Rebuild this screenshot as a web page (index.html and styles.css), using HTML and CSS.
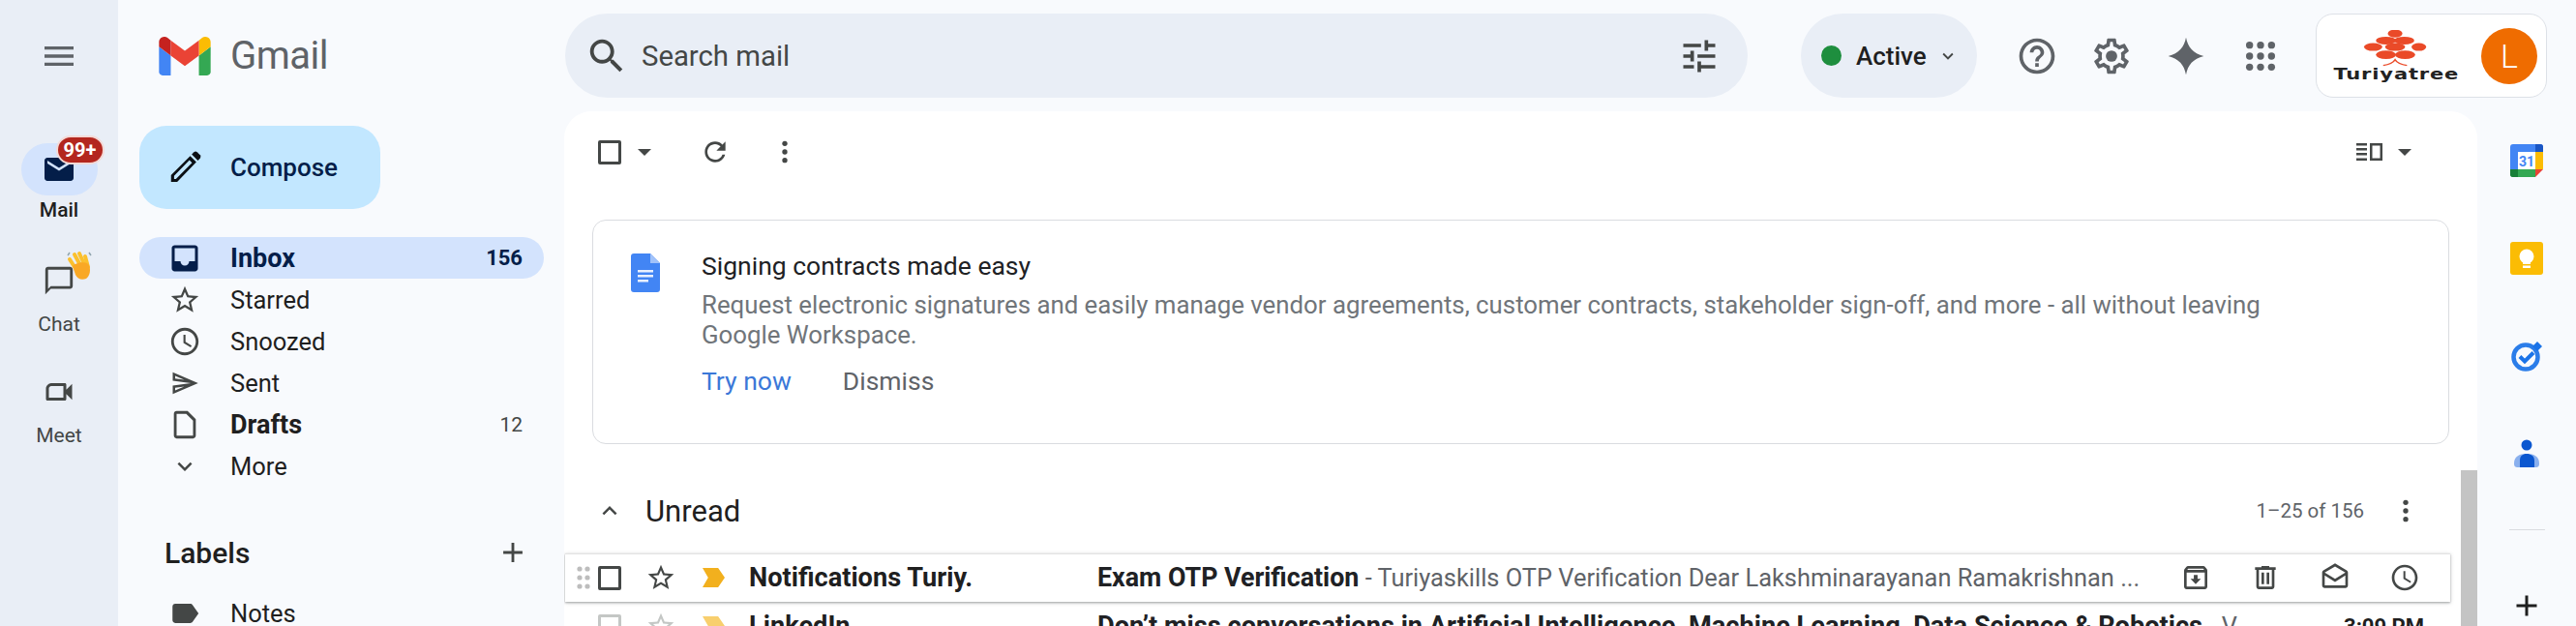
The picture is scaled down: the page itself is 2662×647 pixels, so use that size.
FILE: index.html
```html
<!DOCTYPE html>
<html lang="en">
<head>
<meta charset="utf-8">
<title>Inbox - Gmail</title>
<link rel="stylesheet" href="styles.css">
</head>
<body>
<div class="app">
  <aside class="rail">
    <div class="rail-top">
      <svg class="ic-grey" width="40" height="40" viewBox="0 0 24 24"><path d="M3 18h18v-2H3v2zm0-5h18v-2H3v2zm0-7v2h18V6H3z"/></svg>
    </div>
    <nav class="rail-items">
      <div class="rail-item active">
        <div class="rail-pill">
          <svg class="ic-navy" width="36" height="36" viewBox="0 0 24 24"><path d="M20 4H4c-1.100 0-2 .9-2 2v12c0 1.100.9 2 2 2h16c1.100 0 2-.9 2-2V6c0-1.100-.9-2-2-2zm0 4l-8 5-8-5V6l8 5 8-5v2z"/></svg>
          <span class="badge">99+</span>
        </div>
        <span class="rail-label">Mail</span>
      </div>
      <div class="rail-item">
        <div class="rail-pill">
          <svg class="ic-dark" width="34" height="34" viewBox="0 0 24 24"><path d="M20 2H4c-1.100 0-2 .9-2 2v18l4-4h14c1.100 0 2-.9 2-2V4c0-1.100-.9-2-2-2zm0 14H6l-2 2V4h16v12z"/></svg>
          <svg class="wave" width="28" height="32" viewBox="0 0 28 32"><g fill="none" stroke="#fbc02d" stroke-width="4" stroke-linecap="round"><path d="M4 10l7 11"/><path d="M9 5l7 13"/><path d="M14 4l6 13"/><path d="M20 7l3 11"/></g><path d="M7 17c2-3 14-6 17-1 2 5 1 11-3 14-5 2-9 0-11-4z" fill="#f9a825"/><path d="M2 6l2-3M24 3l2 3" stroke="#90a4ae" stroke-width="1.500" fill="none"/></svg>
        </div>
        <span class="rail-label muted">Chat</span>
      </div>
      <div class="rail-item">
        <div class="rail-pill">
          <svg class="ic-dark" width="36" height="36" viewBox="0 0 24 24"><path d="M17 10.500V7c0-.55-.45-1-1-1H6.500C5 6 3 8 3 9.500V17c0 .55.45 1 1 1h12c.55 0 1-.45 1-1v-3.500l4 4v-11l-4 4zM15 16H5V9.500C5 9 6 8 6.500 8H15v8z"/></svg>
        </div>
        <span class="rail-label muted">Meet</span>
      </div>
    </nav>
  </aside>

  <div class="content">
    <header class="topbar">
      <div class="brand">
        <svg width="54" height="40" viewBox="52 42 88 66"><path fill="#4285f4" d="M58 108h14V74L52 59v43c0 3.320 2.690 6 6 6"/><path fill="#34a853" d="M120 108h14c3.320 0 6-2.690 6-6V59l-20 15"/><path fill="#fbbc04" d="M120 48v26l20-15v-8c0-7.420-8.470-11.650-14.400-7.200"/><path fill="#ea4335" d="M72 74V48l24 18 24-18v26L96 92"/><path fill="#c5221f" d="M52 51v8l20 15V48l-5.600-4.200c-5.940-4.450-14.400-.22-14.400 7.200"/></svg>
        <span class="brand-name">Gmail</span>
      </div>
      <div class="search">
        <svg class="ic-dark" width="46" height="46" viewBox="0 0 24 24"><path d="M15.500 14h-.79l-.28-.27C15.410 12.590 16 11.110 16 9.500 16 5.910 13.090 3 9.500 3S3 5.910 3 9.500 5.910 16 9.500 16c1.610 0 3.090-.59 4.230-1.570l.27.28v.79l5 4.990L20.490 19l-4.990-5zm-6 0C7.010 14 5 11.990 5 9.500S7.010 5 9.500 5 14 7.010 14 9.500 11.990 14 9.500 14z"/></svg>
        <span class="search-text">Search mail</span>
        <svg class="ic-dark" width="44" height="44" viewBox="0 0 24 24"><path d="M3 17v2h6v-2H3zM3 5v2h10V5H3zm10 16v-2h8v-2h-8v-2h-2v6h2zM7 9v2H3v2h4v2h2V9H7zm14 4v-2H11v2h10zm-6-4h2V7h4V5h-4V3h-2v6z"/></svg>
      </div>
      <div class="status">
        <span class="dot"></span>
        <span class="status-text">Active</span>
        <svg class="ic-dark" width="22" height="22" viewBox="0 0 24 24"><path d="M16.590 8.590L12 13.170 7.410 8.590 6 10l6 6 6-6z"/></svg>
      </div>
      <div class="top-icons">
        <svg class="ic-grey" width="44" height="44" viewBox="0 0 24 24"><path d="M11 18h2v-2h-2v2zm1-16C6.480 2 2 6.480 2 12s4.480 10 10 10 10-4.480 10-10S17.520 2 12 2zm0 18c-4.410 0-8-3.590-8-8s3.590-8 8-8 8 3.590 8 8-3.590 8-8 8zm0-14c-2.210 0-4 1.790-4 4h2c0-1.100.9-2 2-2s2 .9 2 2c0 2-3 1.750-3 5h2c0-2.250 3-2.500 3-5 0-2.210-1.790-4-4-4z"/></svg>
        <svg class="ic-grey" width="44" height="44" viewBox="0 0 24 24"><path d="M19.430 12.980c.04-.32.07-.64.07-.98 0-.34-.03-.66-.07-.98l2.110-1.650c.19-.15.24-.42.12-.64l-2-3.460c-.09-.16-.26-.25-.44-.25-.06 0-.12.01-.17.03l-2.490 1c-.52-.4-1.080-.73-1.690-.98l-.38-2.650C14.460 2.180 14.250 2 14 2h-4c-.25 0-.46.18-.49.42l-.38 2.650c-.61.25-1.170.59-1.690.98l-2.490-1c-.06-.02-.12-.03-.18-.03-.17 0-.34.09-.43.25l-2 3.460c-.13.22-.07.49.12.64l2.110 1.650c-.04.32-.07.65-.07.98 0 .33.03.66.07.98l-2.110 1.650c-.19.15-.24.42-.12.64l2 3.460c.09.16.26.25.44.25.06 0 .12-.01.17-.03l2.490-1c.52.4 1.080.73 1.690.98l.38 2.650c.03.24.24.42.49.42h4c.25 0 .46-.18.49-.42l.38-2.650c.61-.25 1.170-.59 1.690-.98l2.490 1c.06.02.12.03.18.03.17 0 .34-.09.43-.25l2-3.460c.12-.22.07-.49-.12-.64l-2.110-1.650zm-1.980-1.710c.04.31.05.52.05.73 0 .21-.02.43-.05.73l-.14 1.130.89.7 1.080.84-.7 1.210-1.270-.51-1.040-.42-.9.68c-.43.32-.84.56-1.250.73l-1.060.43-.16 1.130-.2 1.350h-1.400l-.19-1.350-.16-1.130-1.060-.43c-.43-.18-.83-.41-1.230-.71l-.91-.7-1.060.43-1.270.51-.7-1.210 1.080-.84.89-.7-.14-1.130c-.03-.31-.05-.54-.05-.74s.02-.43.05-.73l.14-1.130-.89-.7-1.080-.84.7-1.210 1.270.51 1.040.42.9-.68c.43-.32.84-.56 1.250-.73l1.060-.43.16-1.130.2-1.350h1.390l.19 1.350.16 1.130 1.060.43c.43.18.83.41 1.230.71l.91.7 1.060-.43 1.270-.51.7 1.210-1.070.85-.89.7.14 1.130z"/><circle cx="12" cy="12" r="3.200"/></svg>
        <svg class="ic-grey" width="44" height="44" viewBox="0 0 24 24"><path d="M12 1.500C13 7 16 10.500 22 12 16 13.500 13 17 12 22.500 11 17 8 13.500 2 12 8 10.500 11 7 12 1.500z"/></svg>
        <svg class="ic-grey apps-grid" width="34" height="34" viewBox="0 0 24 24"><circle cx="4" cy="4" r="2.600"/><circle cx="12" cy="4" r="2.600"/><circle cx="20" cy="4" r="2.600"/><circle cx="4" cy="12" r="2.600"/><circle cx="12" cy="12" r="2.600"/><circle cx="20" cy="12" r="2.600"/><circle cx="4" cy="20" r="2.600"/><circle cx="12" cy="20" r="2.600"/><circle cx="20" cy="20" r="2.600"/></svg>
      </div>
      <div class="account">
        <div class="org">
          <svg width="68" height="38" viewBox="0 0 72 52" preserveAspectRatio="none"><g fill="#ea4a28"><ellipse cx="35" cy="5" rx="8" ry="5.500"/><ellipse cx="25" cy="15" rx="11" ry="5.500"/><ellipse cx="45" cy="15" rx="11" ry="5.500"/><ellipse cx="11" cy="24" rx="10" ry="5.500"/><ellipse cx="35" cy="24" rx="11" ry="5.500"/><ellipse cx="61" cy="24" rx="8" ry="5.500"/><ellipse cx="25" cy="35" rx="11" ry="6"/><ellipse cx="46" cy="35" rx="11" ry="6"/></g><path d="M22 50c6-1 11-4 13-8 2 4 7 7 13 8" fill="none" stroke="#ea4a28" stroke-width="1.800"/></svg>
          <span class="org-name">Turiyatree</span>
        </div>
        <span class="avatar">L</span>
      </div>
    </header>

    <div class="below">
      <nav class="side">
        <button class="compose">
          <svg width="38" height="38" viewBox="0 0 24 24"><path class="pencil" fill-rule="evenodd" d="M3 21.500V17L15.500 4.500l4 4L7 21.500H3zM5 19.500h1.200L16.700 9 15 7.300 5 17.500z"/><path class="pencil" d="M16.500 3.500L18 2q1-.8 2 0l2 2q.8 1 0 2l-1.500 1.500z"/></svg>
          <span>Compose</span>
        </button>
        <ul class="folders">
          <li class="folder current">
            <span class="folder-icon"><svg class="ic-navy" width="36" height="36" viewBox="0 0 24 24"><path d="M19 3H5c-1.100 0-2 .9-2 2v14c0 1.100.9 2 2 2h14c1.100 0 2-.9 2-2V5c0-1.100-.9-2-2-2zm0 11h-4c0 1.660-1.340 3-3 3s-3-1.340-3-3H5V5h14v9z"/></svg></span>
            <span class="folder-name">Inbox</span><span class="count">156</span>
          </li>
          <li class="folder">
            <span class="folder-icon"><svg class="ic-dark" width="34" height="34" viewBox="0 0 24 24"><path d="M22 9.240l-7.190-.62L12 2 9.190 8.630 2 9.240l5.460 4.730L5.820 21 12 17.270 18.180 21l-1.630-7.030L22 9.240zM12 15.400l-3.760 2.270 1-4.280-3.320-2.880 4.380-.38L12 6.100l1.710 4.040 4.380.38-3.320 2.880 1 4.280L12 15.400z"/></svg></span>
            <span class="folder-name">Starred</span>
          </li>
          <li class="folder">
            <span class="folder-icon"><svg class="ic-dark" width="34" height="34" viewBox="0 0 24 24"><path d="M11.990 2C6.470 2 2 6.480 2 12s4.470 10 9.990 10C17.520 22 22 17.520 22 12S17.520 2 11.990 2zM12 20c-4.420 0-8-3.580-8-8s3.580-8 8-8 8 3.580 8 8-3.580 8-8 8zm.5-13H11v6l5.250 3.150.75-1.230-4.500-2.670z"/></svg></span>
            <span class="folder-name">Snoozed</span>
          </li>
          <li class="folder">
            <span class="folder-icon"><svg class="ic-dark" width="30" height="30" viewBox="0 0 24 24"><path d="M4.010 6.030l7.510 3.220-7.520-1 .01-2.220m7.500 8.720L4 17.970v-2.220l7.510-1M2.010 3L2 10l15 2-15 2 .01 7L23 12 2.010 3z"/></svg></span>
            <span class="folder-name">Sent</span>
          </li>
          <li class="folder unread-folder">
            <span class="folder-icon"><svg class="ic-dark" width="34" height="34" viewBox="0 0 24 24"><path d="M14 2H6c-1.100 0-1.990.9-1.990 2L4 20c0 1.100.89 2 1.990 2H18c1.100 0 2-.9 2-2V8l-6-6zM6 20V4h7l5 5v11H6z"/></svg></span>
            <span class="folder-name">Drafts</span><span class="count plain">12</span>
          </li>
          <li class="folder">
            <span class="folder-icon"><svg class="ic-dark" width="30" height="30" viewBox="0 0 24 24"><path d="M16.590 8.590L12 13.170 7.410 8.590 6 10l6 6 6-6z"/></svg></span>
            <span class="folder-name">More</span>
          </li>
        </ul>
        <div class="labels-head">
          <span>Labels</span>
          <svg class="ic-dark" width="34" height="34" viewBox="0 0 24 24"><path d="M19 13h-6v6h-2v-6H5v-2h6V5h2v6h6v2z"/></svg>
        </div>
        <div class="folder label-row">
          <span class="folder-icon"><svg class="ic-dark" width="34" height="34" viewBox="0 0 24 24"><path d="M17.630 5.840C17.270 5.330 16.670 5 16 5L5 5.010C3.900 5.010 3 5.900 3 7v10c0 1.100.9 1.990 2 1.990L16 19c.67 0 1.270-.33 1.630-.84L22 12l-4.370-6.160z"/></svg></span>
          <span class="folder-name">Notes</span>
        </div>
      </nav>

      <main class="main">
        <div class="toolbar">
          <div class="tools">
            <span class="check"></span>
            <span class="caret"></span>
            <svg class="ic-dark refresh" width="32" height="32" viewBox="0 0 24 24"><path d="M17.650 6.350C16.200 4.900 14.210 4 12 4c-4.420 0-7.990 3.580-7.990 8s3.570 8 7.990 8c3.730 0 6.840-2.550 7.730-6h-2.080c-.82 2.330-3.040 4-5.650 4-3.310 0-6-2.690-6-6s2.690-6 6-6c1.660 0 3.140.69 4.220 1.780L13 11h7V4l-2.350 2.350z"/></svg>
            <svg class="ic-dark more-v" width="32" height="32" viewBox="0 0 24 24"><circle cx="12" cy="5.500" r="2"/><circle cx="12" cy="12" r="2"/><circle cx="12" cy="18.500" r="2"/></svg>
          </div>
          <div class="tools-right">
            <svg class="ic-dark" width="30" height="24" viewBox="0 0 30 24"><path d="M1 3h11v2.500H1zM1 8h11v2.500H1zM1 13h11v2.500H1zM1 18.500h11V21H1zM15 3h13v18H15zm2.500 2.500v13h8v-13z"/></svg>
            <span class="caret"></span>
          </div>
        </div>

        <section class="promo">
          <svg class="promo-icon" width="30" height="40" viewBox="0 0 30 40"><path d="M3 0h17l10 10v27a3 3 0 0 1-3 3H3a3 3 0 0 1-3-3V3a3 3 0 0 1 3-3z" fill="#4285f4"/><path d="M20 0l10 10H20z" fill="#a1c2fa"/><path d="M7 17h16v2.500H7zM7 22h16v2.500H7zM7 27h11v2.500H7z" fill="#e8f0fe"/></svg>
          <div class="promo-body">
            <h2 class="promo-title">Signing contracts made easy</h2>
            <p class="promo-text">Request electronic signatures and easily manage vendor agreements, customer contracts, stakeholder sign-off, and more - all without leaving Google Workspace.</p>
            <div class="promo-actions"><span class="try">Try now</span><span class="dismiss">Dismiss</span></div>
          </div>
        </section>

        <div class="section-head">
          <svg class="ic-dark" width="30" height="30" viewBox="0 0 24 24"><path d="M12 8l-6 6 1.410 1.410L12 10.830l4.590 4.580L18 14z"/></svg>
          <span class="section-name">Unread</span>
          <span class="pager">1–25 of 156</span>
          <svg class="ic-dark" width="32" height="32" viewBox="0 0 24 24"><circle cx="12" cy="5.500" r="2"/><circle cx="12" cy="12" r="2"/><circle cx="12" cy="18.500" r="2"/></svg>
        </div>

        <div class="row hover">
          <svg class="grip" width="14" height="26" viewBox="0 0 14 26"><g fill="#bdbdbd"><circle cx="3" cy="4" r="2.600"/><circle cx="11" cy="4" r="2.600"/><circle cx="3" cy="13" r="2.600"/><circle cx="11" cy="13" r="2.600"/><circle cx="3" cy="22" r="2.600"/><circle cx="11" cy="22" r="2.600"/></g></svg>
          <span class="check row-check"></span>
          <svg class="ic-dark row-star" width="32" height="32" viewBox="0 0 24 24"><path d="M22 9.240l-7.190-.62L12 2 9.190 8.630 2 9.240l5.460 4.730L5.820 21 12 17.270 18.180 21l-1.630-7.030L22 9.240zM12 15.400l-3.760 2.270 1-4.280-3.320-2.880 4.380-.38L12 6.100l1.710 4.040 4.380.38-3.320 2.880 1 4.280L12 15.400z"/></svg>
          <span class="important"></span>
          <span class="sender">Notifications Turiy.</span>
          <span class="snippet"><b>Exam OTP Verification</b><span class="sep"> - Turiyaskills OTP Verification Dear Lakshminarayanan Ramakrishnan ...</span></span>
          <span class="row-actions">
            <svg class="ic-dark" width="32" height="32" viewBox="0 0 24 24"><path d="M20.540 5.230l-1.390-1.680C18.880 3.210 18.470 3 18 3H6c-.47 0-.88.21-1.160.55L3.460 5.230C3.170 5.570 3 6.020 3 6.500V19c0 1.100.9 2 2 2h14c1.100 0 2-.9 2-2V6.500c0-.48-.17-.93-.46-1.270zM6.240 5h11.520l.83 1H5.420l.82-1zM5 19V8h14v11H5zm8.450-9h-2.900v3H8l4 4 4-4h-2.550z"/></svg>
            <svg class="ic-dark" width="32" height="32" viewBox="0 0 24 24"><path d="M15 4V3H9v1H4v2h1v13c0 1.100.9 2 2 2h10c1.100 0 2-.9 2-2V6h1V4h-5zm2 15H7V6h10v13zM9 8h2v9H9zm4 0h2v9h-2z"/></svg>
            <svg class="ic-dark" width="32" height="32" viewBox="0 0 24 24"><path d="M21.990 8c0-.72-.37-1.350-.94-1.700L12 1 2.950 6.300C2.380 6.650 2 7.280 2 8v10c0 1.100.9 2 2 2h16c1.100 0 2-.9 2-2l-.01-10zM12 3.320 19.990 8v.01L12 13 4 8l8-4.680zM4 18v-7.660l8 5.020 7.990-4.990L20 18H4z"/></svg>
            <svg class="ic-dark" width="32" height="32" viewBox="0 0 24 24"><path d="M11.990 2C6.470 2 2 6.480 2 12s4.470 10 9.990 10C17.520 22 22 17.520 22 12S17.520 2 11.990 2zM12 20c-4.420 0-8-3.580-8-8s3.580-8 8-8 8 3.580 8 8-3.580 8-8 8zm.5-13H11v6l5.250 3.150.75-1.230-4.500-2.670z"/></svg>
          </span>
        </div>
        <div class="row">
          <span class="grip-space"></span>
          <span class="check row-check faint"></span>
          <svg class="ic-faint row-star" width="32" height="32" viewBox="0 0 24 24"><path d="M22 9.240l-7.190-.62L12 2 9.190 8.630 2 9.240l5.460 4.730L5.820 21 12 17.270 18.180 21l-1.630-7.030L22 9.240zM12 15.400l-3.760 2.270 1-4.280-3.320-2.880 4.380-.38L12 6.100l1.710 4.040 4.380.38-3.320 2.880 1 4.280L12 15.400z"/></svg>
          <span class="important pale"></span>
          <span class="sender">LinkedIn</span>
          <span class="snippet"><b class="long">Don’t miss conversations in Artificial Intelligence, Machine Learning, Data Science &amp; Robotics</b><span class="sep"> - V</span></span>
          <span class="time">3:09 PM</span>
        </div>
        <div class="scrollbar"></div>
      </main>

      <aside class="apps">
        <div class="app-slot">
          <svg width="34" height="34" viewBox="0 0 34 34"><path d="M3 0h28a3 3 0 0 1 3 3v5h-8V8H8v18H0V3a3 3 0 0 1 3-3z" fill="#4285f4"/><path d="M26 0h5a3 3 0 0 1 3 3v5h-8z" fill="#1a56c4"/><rect x="26" y="8" width="8" height="18" fill="#fbbc04"/><path d="M8 26h18v8H3a3 3 0 0 1-3-3v-5h8z" fill="#34a853"/><path d="M0 26h8v8H3a3 3 0 0 1-3-3z" fill="#188038"/><path d="M26 26h8l-8 8z" fill="#ea4335"/><rect x="8" y="8" width="18" height="18" fill="#fff"/><text class="cal-num" x="17" y="23" text-anchor="middle">31</text></svg>
        </div>
        <div class="app-slot">
          <svg width="34" height="34" viewBox="0 0 34 34"><rect width="34" height="34" rx="3" fill="#fbbc04"/><circle cx="17" cy="15" r="7.500" fill="#fff"/><rect x="13" y="20" width="8" height="3" fill="#fff"/><rect x="13" y="24.500" width="8" height="2.500" fill="#fff"/></svg>
        </div>
        <div class="app-slot">
          <svg width="32" height="32" viewBox="0 0 32 32"><circle cx="15" cy="17" r="12.500" fill="none" stroke="#2b7de9" stroke-width="4.500"/><path d="M22 6l5-5 5 5-5 5z" fill="#1a73e8"/><path d="M9 16.500l5 5 9-9" fill="none" stroke="#1a73e8" stroke-width="4"/></svg>
        </div>
        <div class="app-slot">
          <svg width="26" height="30" viewBox="0 0 26 30"><circle cx="13" cy="6" r="5.500" fill="#0b57d0"/><path d="M0 25c0-7 5-10 13-10s13 3 13 10c0 3-1 4-4 4H4c-3 0-4-1-4-4z" fill="#8ab0ee"/><path d="M6 22c0-5 3-7 7-7s8 2 8 7v7H6z" fill="#0b57d0"/></svg>
        </div>
        <div class="apps-rule"></div>
        <svg class="apps-plus" width="36" height="36" viewBox="0 0 24 24"><path d="M19 13h-6v6h-2v-6H5v-2h6V5h2v6h6v2z"/></svg>
      </aside>
    </div>
  </div>
</div>
</body>
</html>
```

FILE: styles.css
```css
* { box-sizing: border-box; }
html, body { margin: 0; height: 100%; overflow: hidden; }
body { font-family: Roboto, "Liberation Sans", sans-serif; color: #1f1f1f; background: #f8fafd; }
svg { display: block; flex: none; }
ul { margin: 0; padding: 0; list-style: none; }

.ic-grey { fill: #5f6368; }
.ic-dark { fill: #444746; }
.ic-navy { fill: #041e49; }
.ic-faint { fill: #c4c7c5; }
.pencil { fill: #0b0f14; }

.app { display: flex; height: 647px; }

/* left rail */
.rail { width: 122px; flex: none; background: #e9eef6; display: flex; flex-direction: column; align-items: center; }
.rail-top { height: 115px; display: flex; align-items: center; justify-content: center; }
.rail-items { margin-top: 33px; display: flex; flex-direction: column; gap: 31px; }
.rail-item { width: 122px; height: 84px; display: flex; flex-direction: column; align-items: center; }
.rail-pill { position: relative; width: 79px; height: 54px; flex: none; border-radius: 27px; display: flex; align-items: center; justify-content: center; }
.rail-item.active .rail-pill { background: #d3e3fd; }
.rail-label { font-size: 21px; line-height: 30px; font-weight: 500; color: #1f1f1f; }
.rail-label.muted { font-weight: 400; color: #444746; margin-top: 3px; }
.badge { position: absolute; left: 36px; top: -8px; width: 50px; height: 30px; border-radius: 15px; background: #b3261e; border: 2px solid #f3d9d6; color: #fff; font-size: 20px; font-weight: 700; line-height: 26px; text-align: center; }
.wave { position: absolute; left: 46px; top: -5px; }

/* top bar */
.content { flex: 1; min-width: 0; display: flex; flex-direction: column; }
.topbar { height: 115px; flex: none; display: flex; align-items: center; }
.brand { width: 462px; flex: none; padding-left: 42px; display: flex; align-items: center; gap: 20px; }
.brand-name { font-size: 40px; color: #5f6368; letter-spacing: -.5px; }
.search { width: 1222px; height: 87px; flex: none; border-radius: 44px; background: #e9eef6; display: flex; align-items: center; padding: 0 28px 0 20px; }
.search-text { font-size: 29.300px; color: #444746; margin-left: 13px; flex: 1; }
.status { width: 182px; height: 87px; flex: none; margin-left: 55px; border-radius: 44px; background: #e9eef6; display: flex; align-items: center; padding-left: 21px; }
.dot { width: 21px; height: 21px; border-radius: 50%; background: #1e8e3e; }
.status-text { font-size: 26px; font-weight: 500; margin: 0 11px 0 15px; }
.top-icons { width: 350px; flex: none; display: flex; align-items: center; padding-left: 40px; gap: 33px; }
.apps-grid { margin-left: 5px; }
.account { width: 239px; height: 87px; flex: none; background: #fff; border: 1px solid #dde1e7; border-radius: 18px; display: flex; align-items: center; justify-content: space-between; padding: 0 9px 0 12px; }
.org { display: flex; flex-direction: column; align-items: center; width: 140px; }
.org-name { font-family: "DejaVu Sans", sans-serif; font-weight: 700; font-size: 15px; line-height: 15px; letter-spacing: .6px; color: #222; transform: scaleX(1.4); margin-top: 1px; }
.avatar { width: 58px; height: 58px; border-radius: 50%; background: #ef6c00; color: #fff; font-size: 34px; font-weight: 300; line-height: 58px; text-align: center; }

/* lower part */
.below { flex: 1; min-height: 0; display: flex; }

.side { width: 461px; flex: none; padding-top: 15px; }
.compose { margin-left: 22px; width: 249px; height: 86px; border: 0; border-radius: 28px; background: #c2e7ff; display: flex; align-items: center; padding: 0 0 0 28px; font: 500 26px Roboto, sans-serif; color: #041e49; gap: 28px; }
.folders { margin-top: 29px; }
.folder { margin-left: 22px; width: 418px; height: 43px; display: flex; align-items: center; font-size: 25.500px; padding-right: 22px; border-radius: 22px; color: #1f1f1f; }
.folder.current { background: #d3e3fd; font-weight: 700; font-size: 27px; color: #041e49; }
.folder.unread-folder { font-weight: 700; font-size: 27px; }
.folder-icon { width: 94px; flex: none; display: flex; justify-content: center; }
.folder-name { flex: 1; }
.count { font-size: 22px; }
.count.plain { font-weight: 400; font-size: 21px; color: #444746; }
.labels-head { margin: 48px 0 0 48px; width: 392px; height: 40px; display: flex; align-items: center; justify-content: space-between; font-size: 30px; font-weight: 500; color: #1f1f1f; padding-right: 15px; }
.label-row { margin-top: 21px; }

.main { position: relative; width: 1977px; flex: none; background: #fff; border-radius: 28px 28px 0 0; overflow: hidden; }
.toolbar { height: 84px; display: flex; align-items: center; justify-content: space-between; padding: 0 68px 0 35px; }
.tools, .tools-right { display: flex; align-items: center; }
.tools-right { gap: 14px; }
.check { display: block; flex: none; width: 24px; height: 25px; border: 3px solid #444746; border-radius: 2px; }
.caret { display: block; flex: none; width: 0; height: 0; border-left: 7px solid transparent; border-right: 7px solid transparent; border-top: 7px solid #444746; }
.tools .caret { margin-left: 17px; }
.refresh { margin-left: 50px; }
.more-v { margin-left: 40px; }

.promo { margin: 28px 29px 0; height: 232px; border: 1px solid #dadce0; border-radius: 14px; display: flex; padding: 31px 0 0 39px; }
.promo-icon { margin: 3px 43px 0 0; }
.promo-body { width: 1640px; }
.promo-title { margin: 0; font-size: 26.500px; line-height: 31px; font-weight: 400; color: #202124; }
.promo-text { margin: 10px 0 0; font-size: 25.800px; line-height: 31px; color: #70757a; }
.promo-actions { margin-top: 16px; display: flex; gap: 53px; font-size: 26.500px; line-height: 32px; }
.try { color: #3b78d8; }
.dismiss { color: #5f6368; }

.section-head { margin-top: 25px; height: 88px; display: flex; align-items: center; padding: 0 58px 0 32px; }
.section-name { font-size: 31px; margin-left: 22px; flex: 1; }
.pager { font-size: 20.500px; color: #5f6368; margin-right: 27px; }

.row { position: relative; margin-left: 1px; width: 1948px; height: 50px; display: flex; align-items: center; font-size: 25.400px; padding-left: 12px; }
.row.hover { background: #fff; z-index: 1; box-shadow: 0 1px 2px rgba(60,64,67,.35), 0 1px 4px rgba(60,64,67,.25), inset 0 1px 0 #e3e3e3; }
.grip-space { width: 14px; flex: none; }
.row-check { margin-left: 8px; width: 24px; }
.row-check.faint { border-color: #c4c7c5; }
.row-star { margin-left: 25px; }
.important { display: block; flex: none; margin-left: 27px; width: 23px; height: 20px; background: #f2b01e; clip-path: polygon(0 0, 70% 0, 100% 50%, 70% 100%, 0 100%, 25% 50%); }
.important.pale { background: #f8cf6e; }
.sender { width: 360px; flex: none; margin-left: 25px; font-size: 27.200px; font-weight: 700; white-space: nowrap; }
.snippet { flex: 1; min-width: 0; white-space: nowrap; overflow: hidden; }
.snippet b { font-size: 26.800px; font-weight: 700; color: #202124; }
.snippet b.long { font-size: 27.200px; }
.sep { color: #5f6368; }
.row-actions { display: flex; gap: 40px; padding-right: 31px; }
.time { flex: none; font-size: 22px; font-weight: 700; padding-right: 27px; margin-left: 30px; }
.scrollbar { position: absolute; right: 0; top: 371px; bottom: 0; width: 17px; background: #c4c4c4; }

.apps { flex: 1; display: flex; flex-direction: column; align-items: center; }
.app-slot { height: 101px; flex: none; display: flex; align-items: center; justify-content: center; }
.apps-rule { width: 37px; height: 1px; background: #dadce0; margin-top: 28px; }
.apps-plus { margin-top: 60px; fill: #1f1f1f; }
.cal-num { font-family: Roboto, sans-serif; font-size: 14px; font-weight: 700; fill: #4285f4; }
```
